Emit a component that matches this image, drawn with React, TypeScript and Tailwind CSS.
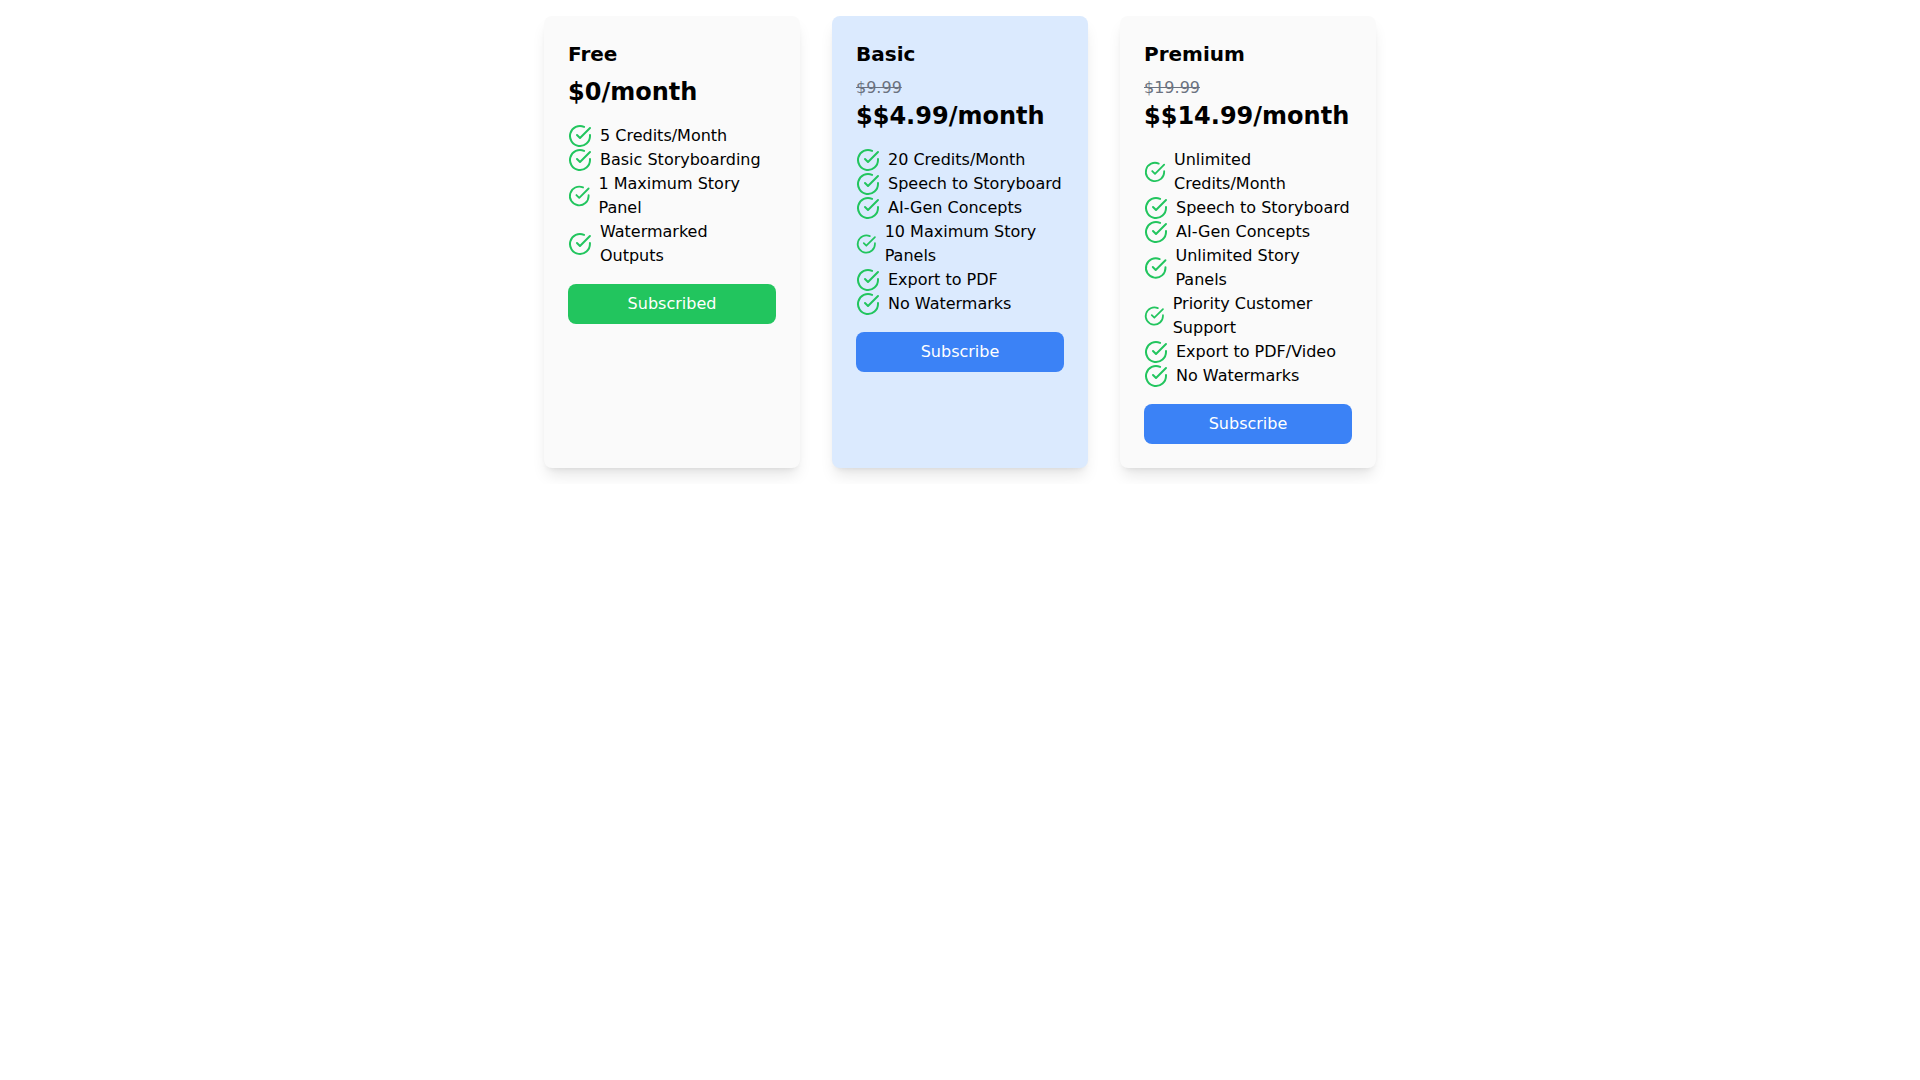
import React, { useState } from 'react'
import { FiCheckCircle } from 'react-icons/fi'

interface Plan {
  name: string
  price: string
  oldPrice?: string
  features: string[]
  highlighted?: boolean
}

const PLANS: Plan[] = [
  {
    name: 'Free',
    price: '0',
    features: ['5 Credits/Month', 'Basic Storyboarding', '1 Maximum Story Panel', 'Watermarked Outputs'],
  },
  {
    name: 'Basic',
    price: '$4.99',
    oldPrice: '$9.99',
    features: [
      '20 Credits/Month',
      'Speech to Storyboard',
      'AI-Gen Concepts',
      '10 Maximum Story Panels',
      'Export to PDF',
      'No Watermarks',
    ],
    highlighted: true,
  },
  {
    name: 'Premium',
    price: '$14.99',
    oldPrice: '$19.99',
    features: [
      'Unlimited Credits/Month',
      'Speech to Storyboard',
      'AI-Gen Concepts',
      'Unlimited Story Panels',
      'Priority Customer Support',
      'Export to PDF/Video',
      'No Watermarks',
    ],
  },
]

interface PlanCardProps {
  plan: Plan
  subscribed: boolean
  onSubscribe: () => void
}

const PlanCard: React.FC<PlanCardProps> = ({ plan, subscribed, onSubscribe }) => (
  <div className={`w-64 rounded-lg p-6 shadow-lg ${plan.highlighted ? 'bg-[#dbeafe]' : 'bg-[#fafafa]'}`}>
    <h2 className="mb-2 text-xl font-bold">{plan.name}</h2>
    {plan.oldPrice && <p className="text-[#6b7280] line-through">{plan.oldPrice}</p>}
    <p className="mb-4 text-2xl font-bold">${plan.price}/month</p>
    <ul className="mb-4">
      {plan.features.map((feature) => (
        <li key={feature} className="flex items-center">
          {/* the icon may shrink next to wrapped text */}
          <FiCheckCircle size={24} className="mr-2 text-[#22c55e]" />
          <span>{feature}</span>
        </li>
      ))}
    </ul>
    <button
      type="button"
      onClick={onSubscribe}
      className={`w-full rounded-lg px-4 py-2 text-white ${subscribed ? 'bg-[#22c55e]' : 'bg-[#3b82f6]'}`}
    >
      {subscribed ? 'Subscribed' : 'Subscribe'}
    </button>
  </div>
)

export default function App() {
  const [currentPlan, setCurrentPlan] = useState('Free')

  return (
    <main className="flex justify-center gap-8 p-4 font-['DejaVu_Sans',sans-serif] text-black">
      {PLANS.map((plan) => (
        <PlanCard
          key={plan.name}
          plan={plan}
          subscribed={plan.name === currentPlan}
          onSubscribe={() => setCurrentPlan(plan.name)}
        />
      ))}
    </main>
  )
}
